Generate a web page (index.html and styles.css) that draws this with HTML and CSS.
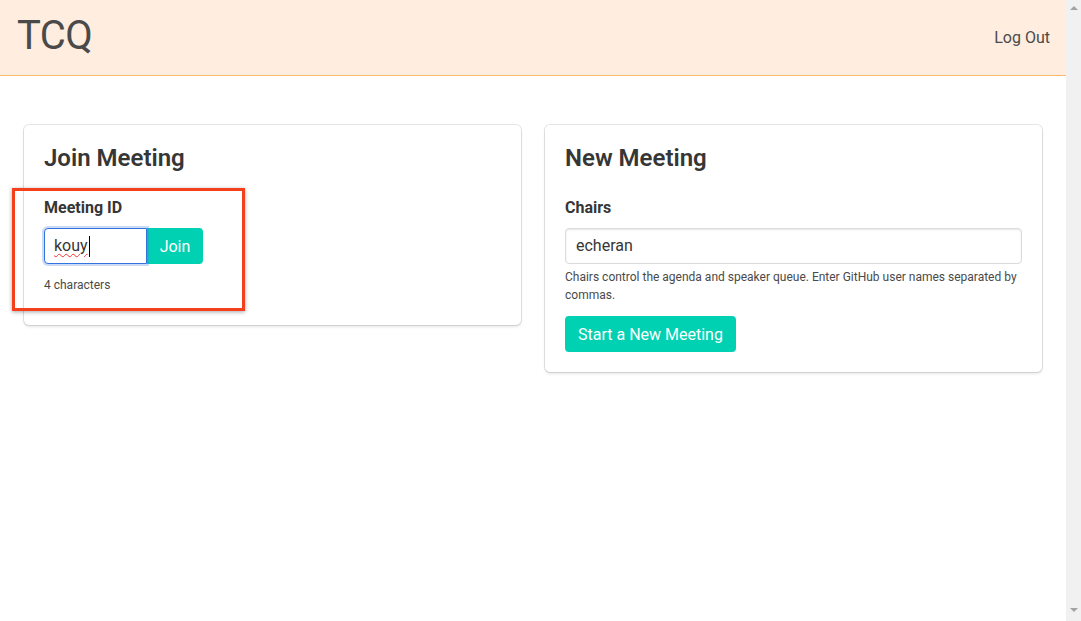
FILE: index.html
```html
<!DOCTYPE html>
<html lang="en">
<head>
<meta charset="utf-8">
<title>TCQ</title>
<link rel="stylesheet" href="styles.css">
</head>
<body>
<div class="window">
  <div class="page">
    <header class="navbar">
      <div class="brand">TCQ</div>
      <a class="logout" href="#">Log Out</a>
    </header>
    <main class="section">
      <div class="columns">
        <div class="column">
          <div class="box">
            <h2 class="title">Join Meeting</h2>
            <div class="field">
              <label class="label">Meeting ID</label>
              <div class="addons">
                <div class="input focused"><span class="typed">kouy</span><span class="caret"></span></div>
                <button class="button join">Join</button>
              </div>
            </div>
            <p class="help help-join">4 characters</p>
          </div>
        </div>
        <div class="column">
          <div class="box">
            <h2 class="title">New Meeting</h2>
            <div class="field">
              <label class="label">Chairs</label>
              <div class="input wide">echeran</div>
              <p class="help">Chairs control the agenda and speaker queue. Enter GitHub user names separated by commas.</p>
            </div>
            <button class="button start">Start a New Meeting</button>
          </div>
        </div>
      </div>
      <div class="annotation"></div>
    </main>
  </div>
  <div class="scrollbar">
    <span class="arrow up"></span>
    <span class="arrow down"></span>
  </div>
</div>
</body>
</html>
```

FILE: styles.css
```css
* { box-sizing: border-box; }
html, body { height: 100%; }
body {
  margin: 0;
  font-family: Roboto, "Liberation Sans", sans-serif;
  font-size: 16px;
  line-height: 1.5;
  color: #4a4a4a;
  background: #fff;
  overflow: hidden;
}
.window {
  display: flex;
  height: 100%;
}
.page {
  flex: 1 1 auto;
  min-width: 0;
}
.scrollbar {
  width: 15px;
  flex: 0 0 15px;
  background: #f1f1f1;
  display: flex;
  flex-direction: column;
  justify-content: space-between;
  align-items: center;
  padding: 6px 0 9px;
}
.arrow {
  width: 0;
  height: 0;
  border-left: 4px solid transparent;
  border-right: 4px solid transparent;
}
.arrow.up { border-bottom: 4px solid #a3a3a3; }
.arrow.down { border-top: 4px solid #a3a3a3; }
.navbar {
  height: 76px;
  background: #ffeddf;
  border-bottom: 1px solid #ffbb6b;
  display: flex;
  align-items: center;
  justify-content: space-between;
  padding: 0 16px 0 17px;
}
.brand {
  font-size: 40px;
  line-height: 1;
  color: #4a4a4a;
  margin-top: -3px;
  letter-spacing: -0.5px;
}
.logout {
  color: #4a4a4a;
  text-decoration: none;
  font-size: 16px;
}
.section {
  position: relative;
  padding: 48px 24px;
}
.columns {
  display: flex;
  margin: -12px -12px 0;
}
.column {
  flex: 1 1 0;
  padding: 12px;
  align-self: flex-start;
}
.box {
  background: #fff;
  border-radius: 5px;
  box-shadow: 0 2px 3px rgba(10,10,10,0.1), 0 0 0 1px rgba(10,10,10,0.1);
  padding: 20px;
  margin-top: 1px;
}
.title {
  margin: 0 0 24px;
  font-size: 24px;
  line-height: 1.125;
  font-weight: 600;
  color: #363636;
}
.field {
  margin-bottom: 12px;
}
.label {
  display: block;
  font-weight: 700;
  color: #363636;
  margin-bottom: 8px;
}
.addons {
  display: flex;
}
.input {
  height: 36px;
  border: 1px solid #dbdbdb;
  border-radius: 4px;
  box-shadow: inset 0 1px 2px rgba(10,10,10,0.1);
  padding: 0 10px;
  font-size: 16px;
  line-height: 34px;
  color: #363636;
  background: #fff;
}
.input.focused {
  width: 103px;
  border-color: #3273dc;
  border-radius: 4px 0 0 4px;
  box-shadow: 0 0 0 2px rgba(50,115,220,0.25);
  display: flex;
  align-items: center;
  position: relative;
  z-index: 1;
  padding-left: 9px;
}
.typed {
  text-decoration: underline wavy #e33;
  text-decoration-thickness: 1px;
  text-underline-offset: 2px;
  line-height: 1;
}
.caret {
  display: inline-block;
  width: 1px;
  height: 21px;
  background: #000;
  margin-left: 1px;
}
.help {
  font-size: 12px;
  line-height: 1.5;
  margin: 4px 0 0;
  color: #4a4a4a;
}
.help-join {
  margin-bottom: 11px;
}
.button {
  font-family: inherit;
  font-size: 16px;
  height: 36px;
  border: 1px solid transparent;
  background: #00d1b2;
  color: #fff;
  border-radius: 4px;
  padding: 0 12px;
  cursor: pointer;
}
.button.join {
  width: 56px;
  border-radius: 0 4px 4px 0;
  padding: 0 11px;
}
.button.start {
  padding: 0 12px;
}
.annotation {
  position: absolute;
  left: 12px;
  top: 112px;
  width: 233px;
  height: 123px;
  border: 3px solid #f5401c;
  box-shadow: 0 1px 4px rgba(0,0,0,0.35);
  pointer-events: none;
}
```
